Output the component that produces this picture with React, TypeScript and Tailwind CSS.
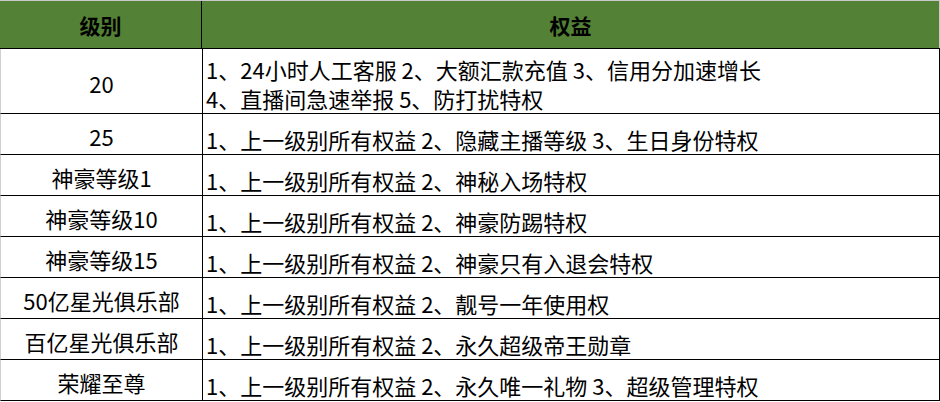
const rows: { level: string; perks: string[] }[] = [
  {
    level: '20',
    perks: ['1、24小时人工客服 2、大额汇款充值 3、信用分加速增长', '4、直播间急速举报 5、防打扰特权'],
  },
  { level: '25', perks: ['1、上一级别所有权益 2、隐藏主播等级 3、生日身份特权'] },
  { level: '神豪等级1', perks: ['1、上一级别所有权益 2、神秘入场特权'] },
  { level: '神豪等级10', perks: ['1、上一级别所有权益 2、神豪防踢特权'] },
  { level: '神豪等级15', perks: ['1、上一级别所有权益 2、神豪只有入退会特权'] },
  { level: '50亿星光俱乐部', perks: ['1、上一级别所有权益 2、靓号一年使用权'] },
  { level: '百亿星光俱乐部', perks: ['1、上一级别所有权益 2、永久超级帝王勋章'] },
  { level: '荣耀至尊', perks: ['1、上一级别所有权益 2、永久唯一礼物 3、超级管理特权'] },
]

export default function App() {
  return (
    <div
      className="w-[940px] h-[402px] overflow-hidden bg-white text-[22px] text-black border-t border-[#c9c9c9]"
      style={{ fontFamily: '"Noto Sans CJK SC", "Noto Sans", sans-serif' }}
    >
      <div className="grid grid-cols-[202px_1fr] h-[48px] bg-[#538135] border-b border-black font-bold text-[21px]">
        <div className="flex items-center justify-center pt-[3px] border-r border-black">级别</div>
        <div className="flex items-center justify-center pt-[3px] border-r border-[#c9c9c9]">权益</div>
      </div>
      {rows.map((row, i) => (
        <div
          key={row.level}
          className={`grid grid-cols-[202px_1fr] border-b border-black border-l border-l-[#d0d0d0] ${
            i === 0 ? 'h-[65px]' : 'h-[41px]'
          }`}
        >
          <div className="flex items-center justify-center pt-[4px] border-r border-black leading-[28px]">
            {row.level}
          </div>
          <div className="flex flex-col justify-end pl-[3px] border-r border-black leading-[29px] whitespace-nowrap">
            {row.perks.map((p) => (
              <div key={p}>{p}</div>
            ))}
          </div>
        </div>
      ))}
    </div>
  )
}
